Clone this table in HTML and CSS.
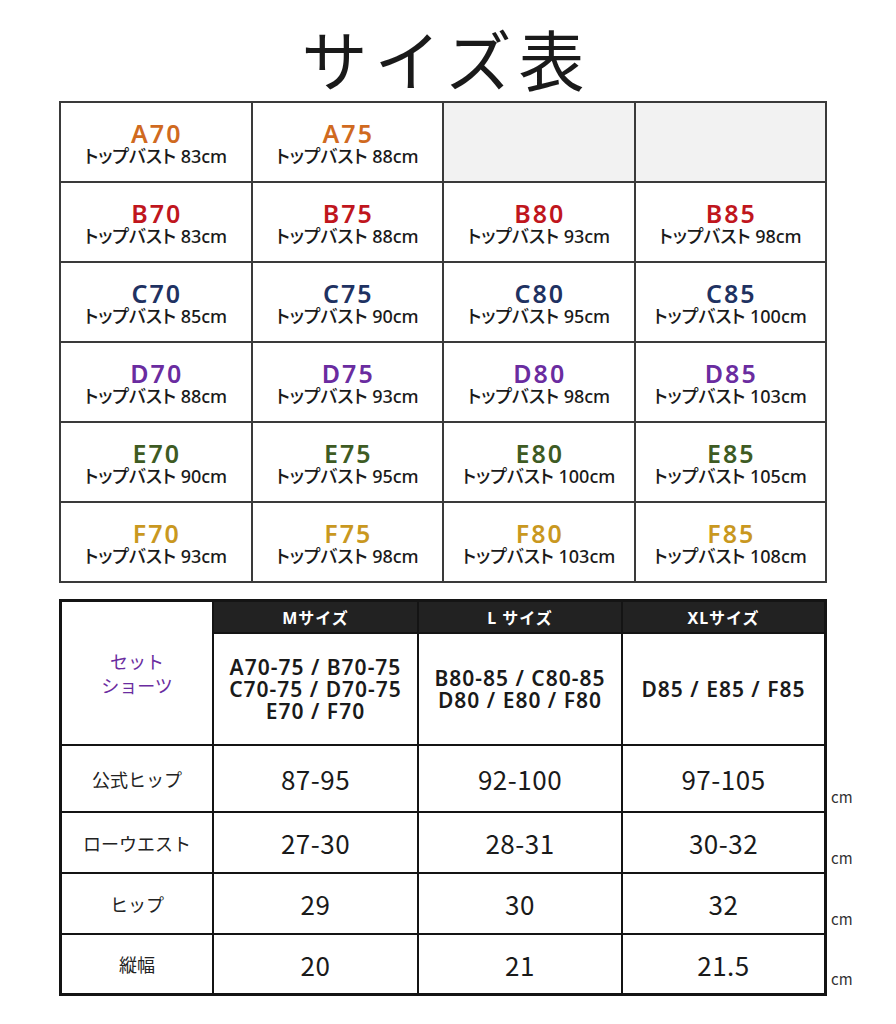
FILE: index.html
```html
<!DOCTYPE html>
<html lang="ja">
<head>
<meta charset="utf-8">
<title>サイズ表</title>
<link rel="stylesheet" href="styles.css">
</head>
<body>
<div class="page">
  <h1 class="title">サイズ表</h1>

  <div class="bra-grid">
    <div class="cell"><span class="code c-a">A70</span><span class="bust">トップバスト 83cm</span></div>
    <div class="cell"><span class="code c-a">A75</span><span class="bust">トップバスト 88cm</span></div>
    <div class="cell empty"></div>
    <div class="cell empty"></div>

    <div class="cell"><span class="code c-b">B70</span><span class="bust">トップバスト 83cm</span></div>
    <div class="cell"><span class="code c-b">B75</span><span class="bust">トップバスト 88cm</span></div>
    <div class="cell"><span class="code c-b">B80</span><span class="bust">トップバスト 93cm</span></div>
    <div class="cell"><span class="code c-b">B85</span><span class="bust">トップバスト 98cm</span></div>

    <div class="cell"><span class="code c-c">C70</span><span class="bust">トップバスト 85cm</span></div>
    <div class="cell"><span class="code c-c">C75</span><span class="bust">トップバスト 90cm</span></div>
    <div class="cell"><span class="code c-c">C80</span><span class="bust">トップバスト 95cm</span></div>
    <div class="cell"><span class="code c-c">C85</span><span class="bust">トップバスト 100cm</span></div>

    <div class="cell"><span class="code c-d">D70</span><span class="bust">トップバスト 88cm</span></div>
    <div class="cell"><span class="code c-d">D75</span><span class="bust">トップバスト 93cm</span></div>
    <div class="cell"><span class="code c-d">D80</span><span class="bust">トップバスト 98cm</span></div>
    <div class="cell"><span class="code c-d">D85</span><span class="bust">トップバスト 103cm</span></div>

    <div class="cell"><span class="code c-e">E70</span><span class="bust">トップバスト 90cm</span></div>
    <div class="cell"><span class="code c-e">E75</span><span class="bust">トップバスト 95cm</span></div>
    <div class="cell"><span class="code c-e">E80</span><span class="bust">トップバスト 100cm</span></div>
    <div class="cell"><span class="code c-e">E85</span><span class="bust">トップバスト 105cm</span></div>

    <div class="cell"><span class="code c-f">F70</span><span class="bust">トップバスト 93cm</span></div>
    <div class="cell"><span class="code c-f">F75</span><span class="bust">トップバスト 98cm</span></div>
    <div class="cell"><span class="code c-f">F80</span><span class="bust">トップバスト 103cm</span></div>
    <div class="cell"><span class="code c-f">F85</span><span class="bust">トップバスト 108cm</span></div>
  </div>

  <div class="shorts-wrap">
    <div class="shorts-grid">
      <div class="s-cell s-name">セット<br>ショーツ</div>
      <div class="s-head">Mサイズ</div>
      <div class="s-head">L サイズ</div>
      <div class="s-head">XLサイズ</div>

      <div class="s-cell s-fit"><span class="fl">A70-75 / B70-75</span><span class="fl">C70-75 / D70-75</span><span class="fl">E70 / F70</span></div>
      <div class="s-cell s-fit"><span class="fl">B80-85 / C80-85</span><span class="fl">D80 / E80 / F80</span></div>
      <div class="s-cell s-fit"><span class="fl">D85 / E85 / F85</span></div>

      <div class="s-cell s-label">公式ヒップ</div>
      <div class="s-cell s-num">87-95</div>
      <div class="s-cell s-num">92-100</div>
      <div class="s-cell s-num">97-105</div>

      <div class="s-cell s-label">ローウエスト</div>
      <div class="s-cell s-num">27-30</div>
      <div class="s-cell s-num">28-31</div>
      <div class="s-cell s-num">30-32</div>

      <div class="s-cell s-label">ヒップ</div>
      <div class="s-cell s-num">29</div>
      <div class="s-cell s-num">30</div>
      <div class="s-cell s-num">32</div>

      <div class="s-cell s-label">縦幅</div>
      <div class="s-cell s-num">20</div>
      <div class="s-cell s-num">21</div>
      <div class="s-cell s-num">21.5</div>
    </div>
    <div class="units">
      <span class="unit u1">cm</span>
      <span class="unit u2">cm</span>
      <span class="unit u3">cm</span>
      <span class="unit u4">cm</span>
    </div>
  </div>
</div>
</body>
</html>
```

FILE: styles.css
```css
* { box-sizing: border-box; }

html, body {
  margin: 0;
  padding: 0;
  background: #ffffff;
}

body {
  font-family: "Noto Sans", "Noto Sans CJK JP", sans-serif;
  color: #1a1a1a;
}

.page {
  width: 896px;
  padding-left: 59px;
}

.title {
  margin: 0;
  height: 101px;
  width: 768px;
  padding-top: 24px;
  text-align: center;
  font-family: "Noto Sans CJK JP", sans-serif;
  font-weight: 400;
  font-size: 66px;
  line-height: 1;
  letter-spacing: 7px;
  text-indent: 7px;
  color: #1a1a1a;
}

/* ---------- bra size grid ---------- */
.bra-grid {
  width: 768px;
  display: grid;
  grid-template-columns: repeat(4, 1fr);
  grid-auto-rows: 78px;
  gap: 2px;
  padding: 2px;
  background: #3a3a3a;
}

.cell {
  background: #ffffff;
  display: flex;
  flex-direction: column;
  align-items: center;
  justify-content: center;
  padding-top: 4px;
}

.cell.empty {
  background: #f2f2f2;
}

.code {
  font-family: "Noto Sans", sans-serif;
  font-weight: 600;
  font-size: 25px;
  line-height: 24px;
  letter-spacing: 2px;
  text-indent: 2px;
}

.bust {
  font-family: "Noto Sans", "Noto Sans CJK JP", sans-serif;
  font-feature-settings: "palt";
  font-size: 18px;
  line-height: 23px;
  font-weight: 500;
  color: #1a1a1a;
}

.c-a { color: #d06a1f; }
.c-b { color: #c0161d; }
.c-c { color: #1f3262; }
.c-d { color: #6a2ca0; }
.c-e { color: #3e5b23; }
.c-f { color: #c9981f; }

/* ---------- shorts table ---------- */
.shorts-wrap {
  display: flex;
  margin-top: 16px;
}

.shorts-grid {
  width: 768px;
  flex: none;
  display: grid;
  grid-template-columns: 150px 203px 202px 201px;
  grid-template-rows: 30px 110px 65px 59px 59px 58px;
  gap: 2px;
  padding: 3px;
  background: #141414;
}

.s-head {
  background: #222222;
  color: #ffffff;
  font-family: "Noto Sans", "Noto Sans CJK JP", sans-serif;
  font-weight: 700;
  font-size: 16px;
  letter-spacing: 1px;
  display: flex;
  align-items: center;
  justify-content: center;
}

.s-cell {
  background: #ffffff;
  display: flex;
  align-items: center;
  justify-content: center;
  text-align: center;
}

.s-name {
  grid-row: 1 / span 2;
  color: #6a2ca0;
  font-family: "Noto Sans CJK JP", sans-serif;
  font-size: 18px;
  line-height: 24px;
}

.s-fit {
  flex-direction: column;
  font-family: "Noto Sans", sans-serif;
  font-weight: 600;
  font-size: 21px;
  letter-spacing: 1px;
  color: #1a1a1a;
}

.fl {
  display: block;
  height: 22px;
  line-height: 22px;
}

.s-label {
  font-family: "Noto Sans CJK JP", sans-serif;
  font-size: 18px;
  color: #222222;
}

.s-num {
  font-family: "Noto Sans CJK JP", sans-serif;
  font-size: 26px;
  font-weight: 400;
  letter-spacing: 0.5px;
  color: #1a1a1a;
}

.units {
  display: grid;
  grid-template-rows: 30px 110px 65px 59px 59px 58px;
  row-gap: 2px;
  padding-top: 3px;
  padding-left: 4px;
}

.unit {
  align-self: end;
  font-family: "Noto Sans CJK JP", sans-serif;
  font-size: 15px;
  line-height: 15px;
  padding-bottom: 7px;
  color: #333333;
}

.u1 { grid-row: 3; }
.u2 { grid-row: 4; }
.u3 { grid-row: 5; }
.u4 { grid-row: 6; }
```
